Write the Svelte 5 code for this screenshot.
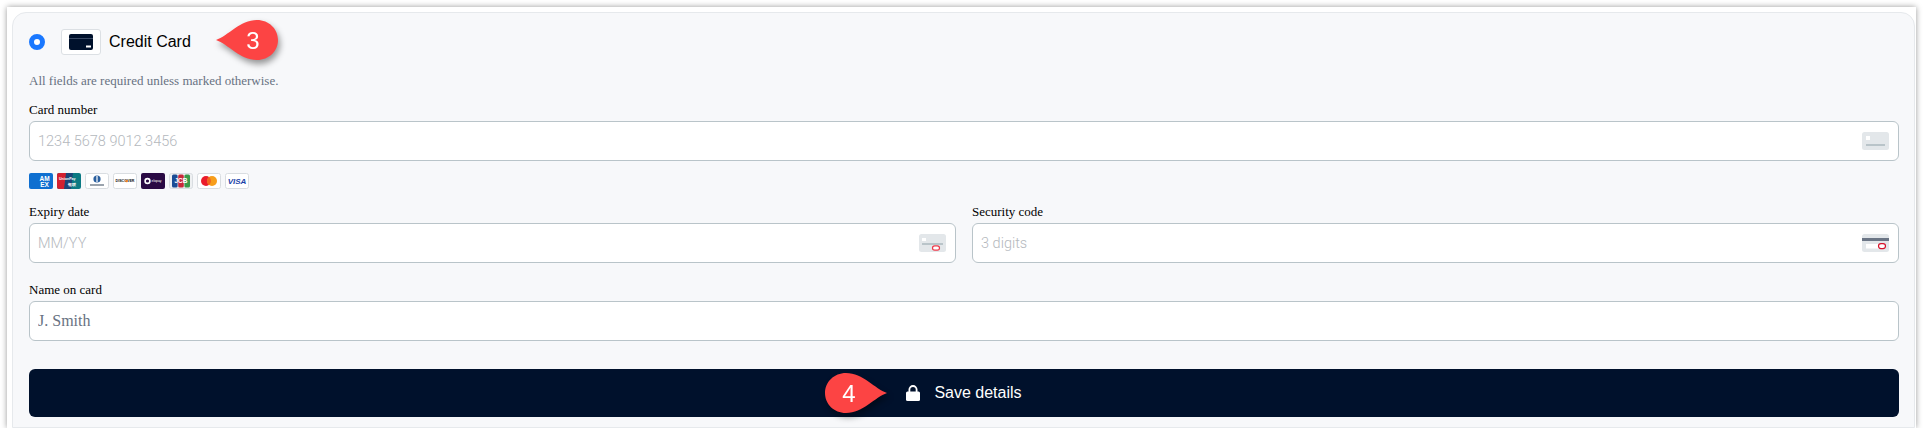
<script>
  // payment form for a credit card, with two callout markers on top
</script>

{#snippet bubble(n, flip)}
  <svg class="bubble-svg" width="64" height="50" viewBox="0 0 64 50">
    <g transform={flip ? 'translate(64 0) scale(-1 1)' : ''}>
      <path d="M0 23 C 12 19, 24 3, 41 3 C 53 3, 62 12, 62 23 C 62 34, 53 43, 41 43 C 24 43, 12 27, 0 23 Z" fill="#fc4444" />
    </g>
    <text x={flip ? 26 : 37} y="32" text-anchor="middle">{n}</text>
  </svg>
{/snippet}

<div class="frame">
  <div class="panel">
    <div class="method">
      <span class="radio"></span>
      <span class="method-icon">
        <svg width="24" height="16" viewBox="0 0 24 16">
          <rect width="24" height="16" rx="2" fill="#00112c" />
          <rect y="4" width="24" height="1" fill="#3a4a66" />
          <rect x="17" y="11.5" width="5" height="2" fill="#fff" />
        </svg>
      </span>
      <span class="method-name">Credit Card</span>
      <span class="callout callout-3">{@render bubble(3, false)}</span>
    </div>

    <p class="hint">All fields are required unless marked otherwise.</p>

    <div class="field">
      <label for="num">Card number</label>
      <div class="input">
        <input id="num" class="sans" placeholder="1234 5678 9012 3456" />
        <svg class="field-icon" width="27" height="18" viewBox="0 0 27 18">
          <rect width="27" height="18" rx="2.5" fill="#e3e7ea" />
          <rect x="4" y="4" width="4" height="4" fill="#fff" />
          <rect x="4" y="12" width="19" height="2" fill="#b9c4c9" />
        </svg>
      </div>
    </div>

    <div class="brands">
      <svg width="24" height="16" viewBox="0 0 24 16">
        <rect width="24" height="16" rx="2" fill="#0f6fd0" />
        <text x="15.5" y="7.5" class="amex">AM</text>
        <text x="15.5" y="13.5" class="amex">EX</text>
      </svg>
      <svg width="24" height="16" viewBox="0 0 24 16">
        <rect width="24" height="16" rx="2" fill="#0b7a83" />
        <path d="M2 0h8l-2 16H2a2 2 0 0 1-2-2V2a2 2 0 0 1 2-2z" fill="#d3202f" />
        <path d="M9 0h7l-2 16H7z" fill="#1b4578" />
        <text x="2" y="7" class="up">UnionPay</text>
        <text x="11" y="13" class="up">银联</text>
      </svg>
      <svg width="24" height="16" viewBox="0 0 24 16">
        <rect x=".5" y=".5" width="23" height="15" rx="2" fill="#fff" stroke="#d9dde1" />
        <circle cx="12" cy="6" r="3.6" fill="#2a5f9e" />
        <rect x="11.4" y="3" width="1.2" height="6" fill="#fff" />
        <rect x="5" y="11" width="14" height="2" fill="#9aa3ad" />
      </svg>
      <svg width="24" height="16" viewBox="0 0 24 16">
        <rect x=".5" y=".5" width="23" height="15" rx="2" fill="#fff" stroke="#d9dde1" />
        <text x="12" y="9.4" text-anchor="middle" class="disc">DISCOVER</text>
        <circle cx="13.6" cy="8" r="1.3" fill="#f08020" />
      </svg>
      <svg width="24" height="16" viewBox="0 0 24 16">
        <rect width="24" height="16" rx="2" fill="#2a0a44" />
        <circle cx="6.5" cy="8" r="2.4" fill="none" stroke="#fff" stroke-width="1.6" />
        <text x="10.5" y="9.4" class="elo">elopay</text>
      </svg>
      <svg width="24" height="16" viewBox="0 0 24 16">
        <rect x=".5" y=".5" width="23" height="15" rx="2" fill="#eef0f2" stroke="#d9dde1" />
        <rect x="3" y="1.5" width="5.6" height="13" rx="1.5" fill="#1b4d95" />
        <rect x="9.2" y="1.5" width="5.6" height="13" rx="1.5" fill="#c9283a" />
        <rect x="15.4" y="1.5" width="5.6" height="13" rx="1.5" fill="#3a9a4a" />
        <text x="12" y="10.4" text-anchor="middle" class="jcb">JCB</text>
      </svg>
      <svg width="24" height="16" viewBox="0 0 24 16">
        <rect x=".5" y=".5" width="23" height="15" rx="2" fill="#fff" stroke="#d9dde1" />
        <circle cx="9" cy="8" r="5" fill="#ea1c2c" />
        <circle cx="15" cy="8" r="5" fill="#f79e1b" />
        <path d="M12 4a5 5 0 0 1 0 8 5 5 0 0 1 0-8z" fill="#f26522" />
      </svg>
      <svg width="24" height="16" viewBox="0 0 24 16">
        <rect x=".5" y=".5" width="23" height="15" rx="2" fill="#fff" stroke="#d9dde1" />
        <text x="12" y="11.2" text-anchor="middle" class="visa">VISA</text>
      </svg>
    </div>

    <div class="two-col">
      <div class="field">
        <label for="exp">Expiry date</label>
        <div class="input">
          <input id="exp" class="sans" placeholder="MM/YY" />
          <svg class="field-icon" width="27" height="18" viewBox="0 0 27 18">
            <rect width="27" height="18" rx="2.5" fill="#e3e7ea" />
            <rect x="3" y="4" width="4" height="3" fill="#fff" />
            <rect x="3" y="9" width="21" height="2" fill="#b9c4c9" />
            <rect x="13.5" y="11.8" width="7" height="4.4" rx="2.2" fill="#fff" stroke="#ee3b4b" stroke-width="1.2" />
          </svg>
        </div>
      </div>
      <div class="field">
        <label for="cvc">Security code</label>
        <div class="input">
          <input id="cvc" class="sans" placeholder="3 digits" />
          <svg class="field-icon" width="27" height="18" viewBox="0 0 27 18">
            <rect width="27" height="18" rx="2.5" fill="#e3e7ea" />
            <rect y="4" width="27" height="3" fill="#6b7585" />
            <rect x="4" y="10" width="19" height="4.5" fill="#fff" />
            <rect x="16.5" y="9.6" width="7" height="5" rx="2.5" fill="#fff" stroke="#d6142c" stroke-width="1.2" />
          </svg>
        </div>
      </div>
    </div>

    <div class="field name-field">
      <label for="name">Name on card</label>
      <div class="input">
        <input id="name" class="serif" placeholder="J. Smith" />
      </div>
    </div>

    <button class="save">
      <span class="callout callout-4">{@render bubble(4, true)}</span>
      <svg width="14" height="16" viewBox="0 0 14 16">
        <path d="M3.4 7V4.6a3.6 3.6 0 0 1 7.2 0V7" fill="none" stroke="#fff" stroke-width="1.8" />
        <rect y="6.5" width="14" height="9.5" rx="1.5" fill="#fff" />
      </svg>
      <span>Save details</span>
    </button>
  </div>
</div>

<style>
  :global(body) {
    margin: 0;
    background: #fff;
  }
  .frame {
    margin: 7px 8px 0 7px;
    height: 421px;
    box-sizing: border-box;
    padding: 5px 1px 0 5px;
    background: #fff;
    box-shadow: 0 0 6px rgba(0, 0, 0, 0.4);
  }
  .panel {
    box-sizing: border-box;
    height: 416px;
    padding: 16px 15px 0 16px;
    background: #f7f8fa;
    border: 1px solid #e6e9ec;
    border-radius: 14px 14px 0 0;
    font-family: "Liberation Serif", serif;
    color: #00112c;
  }
  .method {
    display: flex;
    align-items: center;
    height: 26px;
    position: relative;
  }
  .radio {
    box-sizing: border-box;
    width: 16px;
    height: 16px;
    border-radius: 50%;
    border: 5px solid #1a78ff;
    background: #fff;
    margin-right: 16px;
  }
  .method-icon {
    box-sizing: border-box;
    display: flex;
    align-items: center;
    justify-content: center;
    width: 40px;
    height: 26px;
    background: #fff;
    border: 1px solid #dce0e4;
    border-radius: 3px;
    margin-right: 8px;
  }
  .method-name {
    font: 16px "Liberation Sans", sans-serif;
    color: #000;
  }
  .callout {
    position: absolute;
    display: block;
    line-height: 0;
    filter: drop-shadow(2px 4px 3px rgba(0, 0, 0, 0.4));
  }
  .callout-3 {
    left: 187px;
    top: -12px;
  }
  .callout-4 {
    left: 794px;
    top: 1px;
  }
  .bubble-svg text {
    font: 24px "Liberation Sans", sans-serif;
    fill: #fff;
  }
  .hint {
    margin: 18px 0 0;
    font-size: 13px;
    line-height: 15px;
    color: #687282;
  }
  .field {
    display: flex;
    flex-direction: column;
    flex: 1;
    min-width: 0;
  }
  .hint + .field {
    margin-top: 14px;
  }
  label {
    font-size: 13px;
    line-height: 16px;
    margin-bottom: 3px;
    color: #000;
  }
  .input {
    position: relative;
  }
  input {
    box-sizing: border-box;
    display: block;
    width: 100%;
    height: 40px;
    padding: 0 8px;
    background: #fff;
    border: 1px solid #b9c4c9;
    border-radius: 6px;
    outline: none;
    font-size: 16px;
  }
  input.sans {
    font-family: Roboto, sans-serif;
    font-size: 14.5px;
    font-weight: 300;
  }
  input.sans::placeholder {
    color: #b4b8bd;
    opacity: 1;
  }
  input.serif {
    font-family: "Liberation Serif", serif;
  }
  input.serif::placeholder {
    color: #687282;
    opacity: 1;
  }
  .field-icon {
    position: absolute;
    right: 10px;
    top: 11px;
  }
  .brands {
    display: flex;
    gap: 4px;
    margin-top: 12px;
    height: 16px;
  }
  .brands svg {
    display: block;
  }
  .brands text {
    font-family: "Liberation Sans", sans-serif;
  }
  .amex {
    font-size: 6.5px;
    font-weight: 700;
    fill: #fff;
    text-anchor: middle;
  }
  .up {
    font-size: 3.6px;
    font-weight: 700;
    fill: #fff;
  }
  .disc {
    font-size: 3.6px;
    font-weight: 700;
    fill: #111;
  }
  .elo {
    font-size: 3.4px;
    fill: #fff;
  }
  .jcb {
    font-size: 6.5px;
    font-weight: 700;
    fill: #fff;
  }
  .visa {
    font-size: 8px;
    font-style: italic;
    font-weight: 700;
    fill: #1a3fa8;
  }
  .two-col {
    display: flex;
    gap: 16px;
    margin-top: 15px;
  }
  .name-field {
    margin-top: 19px;
  }
  .save {
    position: relative;
    display: flex;
    align-items: center;
    justify-content: center;
    gap: 14px;
    width: 100%;
    height: 48px;
    margin-top: 28px;
    background: #00112c;
    border: none;
    border-radius: 6px;
    color: #fff;
    font: 16px "Liberation Sans", sans-serif;
  }
</style>
